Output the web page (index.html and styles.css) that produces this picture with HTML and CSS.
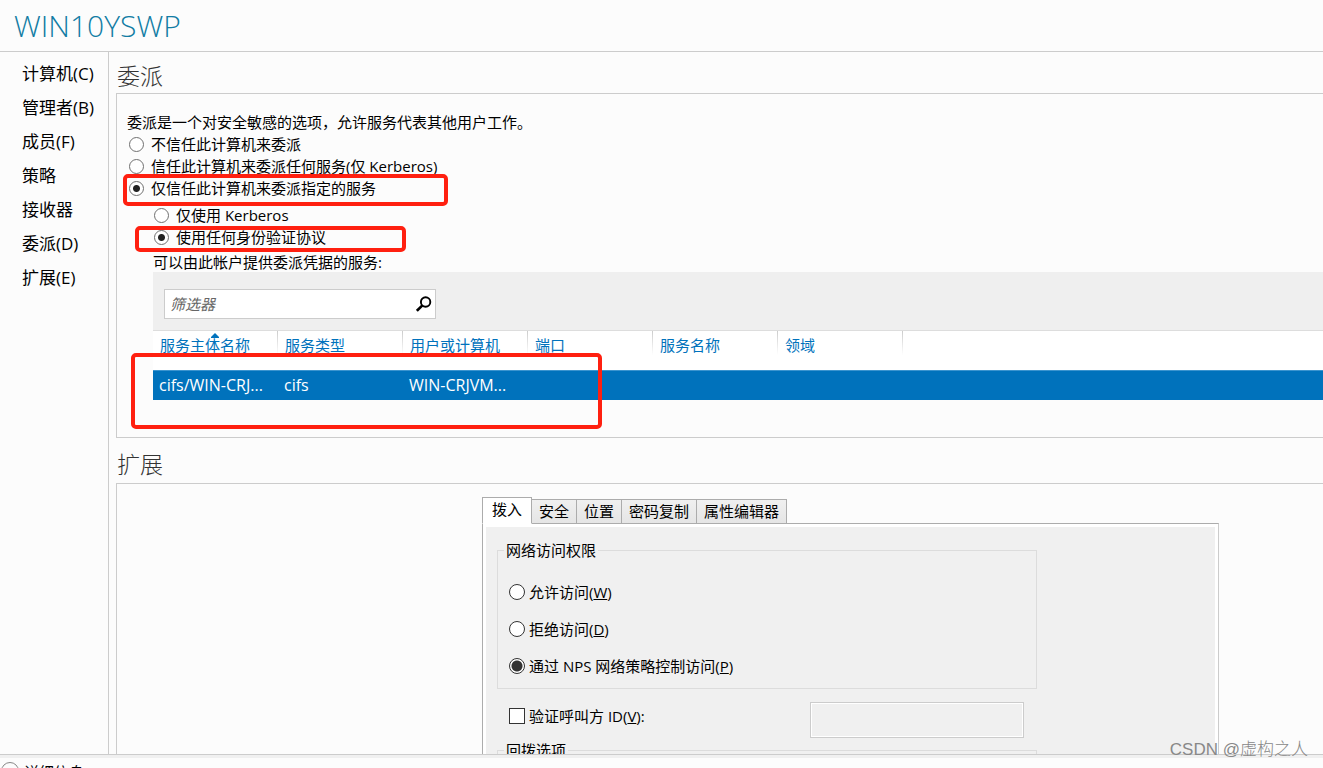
FILE: index.html
```html
<!DOCTYPE html>
<html lang="zh-CN">
<head>
<meta charset="utf-8">
<title>WIN10YSWP</title>
<link rel="stylesheet" href="styles.css">
</head>
<body>
<header class="title-bar"><h1 class="title">WIN10YSWP</h1></header>
<div class="main">
  <nav class="side">
    <a class="side-link" href="#computer">计算机(C)</a>
    <a class="side-link" href="#manager">管理者(B)</a>
    <a class="side-link" href="#members">成员(F)</a>
    <a class="side-link" href="#policy">策略</a>
    <a class="side-link" href="#silo">接收器</a>
    <a class="side-link" href="#delegation">委派(D)</a>
    <a class="side-link" href="#extensions">扩展(E)</a>
  </nav>
  <main class="content">
    <h2 class="heading" id="delegation">委派</h2>
    <section class="panel delegation">
      <p class="intro">委派是一个对安全敏感的选项，允许服务代表其他用户工作。</p>
      <label class="choice"><input class="radio" type="radio" name="trust">不信任此计算机来委派</label>
      <label class="choice"><input class="radio" type="radio" name="trust">信任此计算机来委派任何服务(仅 Kerberos)</label>
      <label class="choice"><input class="radio" type="radio" name="trust" checked>仅信任此计算机来委派指定的服务</label>
      <div class="sub-choices">
        <label class="choice"><input class="radio" type="radio" name="protocol">仅使用 Kerberos</label>
        <label class="choice"><input class="radio" type="radio" name="protocol" checked>使用任何身份验证协议</label>
      </div>
      <div class="services">
        <p class="services-label">可以由此帐户提供委派凭据的服务:</p>
        <div class="filter-bar">
          <div class="filter">
            <input class="filter-input" type="text" placeholder="筛选器" aria-label="筛选器">
            <button class="filter-button" type="button" aria-label="搜索">
              <svg width="16" height="16" viewBox="0 0 16 16" fill="none" stroke="#000"><circle cx="9.6" cy="6" r="4.7" stroke-width="1.9"/><path d="M6.4 9.4L0.9 14.8" stroke-width="2.6"/></svg>
            </button>
          </div>
        </div>
        <table class="grid">
          <colgroup><col class="col"><col class="col"><col class="col"><col class="col"><col class="col"><col class="col"><col></colgroup>
          <thead><tr>
            <th>服务主体名称<svg class="sort" width="8" height="5" viewBox="0 0 8 5"><path d="M0 5V4L4 0L8 4V5Z" fill="#0072bc"/></svg></th>
            <th>服务类型</th><th>用户或计算机</th><th>端口</th><th>服务名称</th><th>领域</th><td></td>
          </tr></thead>
          <tbody><tr><td>cifs/WIN-CRJ...</td><td>cifs</td><td>WIN-CRJVM...</td><td></td><td></td><td></td><td></td></tr></tbody>
        </table>
      </div>
      <div class="mark mark-trust"></div>
      <div class="mark mark-protocol"></div>
      <div class="mark mark-services"></div>
    </section>
    <h2 class="heading heading-next" id="extensions">扩展</h2>
    <section class="panel extensions">
      <div class="tabs" role="tablist">
        <button class="tab tab-active" type="button" role="tab" aria-selected="true">拨入</button>
        <button class="tab" type="button" role="tab">安全</button>
        <button class="tab" type="button" role="tab">位置</button>
        <button class="tab" type="button" role="tab">密码复制</button>
        <button class="tab" type="button" role="tab">属性编辑器</button>
      </div>
      <div class="pane">
        <fieldset class="group">
          <legend>网络访问权限</legend>
          <label class="option"><input class="radio radio-large" type="radio" name="access"><span>允许访问(<u>W</u>)</span></label>
          <label class="option"><input class="radio radio-large" type="radio" name="access"><span>拒绝访问(<u>D</u>)</span></label>
          <label class="option"><input class="radio radio-large" type="radio" name="access" checked><span>通过 NPS 网络策略控制访问(<u>P</u>)</span></label>
        </fieldset>
        <div class="caller">
          <label class="caller-check"><input class="check" type="checkbox"><span>验证呼叫方 ID(<u>V</u>):</span></label>
          <input class="caller-input" type="text" aria-label="呼叫方 ID" disabled>
        </div>
        <fieldset class="group group-callback"><legend>回拨选项</legend></fieldset>
      </div>
    </section>
  </main>
</div>
<footer class="footer">
  <button class="details" type="button"><span class="details-ring"></span>详细信息</button>
</footer>
<div class="watermark">CSDN @虚构之人</div>
</body>
</html>
```
FILE: styles.css
```css
* { box-sizing: border-box; }

body {
  margin: 0;
  height: 100vh;
  display: flex;
  flex-direction: column;
  overflow: hidden;
  position: relative;
  background: #fcfcfc;
  color: #000;
  font: 15px/20px "Open Sans", "Noto Sans CJK SC", sans-serif;
}

h1, h2, p { margin: 0; font-weight: 300; }
button, input { font: inherit; color: inherit; }

.title-bar { padding: 5px 14px; border-bottom: 1px solid #ccc; }
.title { font-size: 30px; line-height: 41px; color: #127ca4; }

.main { flex: 1; min-height: 0; display: flex; }
.side {
  width: 109px;
  flex: none;
  display: flex;
  flex-direction: column;
  padding: 5px 0 0 22px;
  border-right: 1px solid #ccc;
}
.side-link { font-size: 17px; line-height: 34px; color: #000; text-decoration: none; white-space: nowrap; }

.content { flex: 1; min-width: 0; display: flex; flex-direction: column; padding-left: 7px; overflow: hidden; }
.heading { padding: 8px 1px 0; font-size: 23px; line-height: 33px; color: #333; flex: none; }
.heading-next { padding: 10px 1px 2px; }

.panel { border: 1px solid #ccc; border-right: 0; }
.delegation { flex: none; position: relative; padding: 17px 0 37px 10px; }
.intro { font-weight: 400; line-height: 22px; }
.choice { display: flex; align-items: center; gap: 7px; padding-left: 2px; line-height: 22px; }
.sub-choices { padding: 5px 0 0 25px; }

.radio {
  appearance: none;
  flex: none;
  width: 15px;
  height: 15px;
  margin: 0;
  border: 1px solid #707070;
  border-radius: 50%;
  background: #fff;
}
.radio:checked { background: radial-gradient(circle, #222 0 3px, #fff 4px); }
.radio-large { width: 16px; height: 16px; border-color: #333; }
.radio-large:checked { background: radial-gradient(circle, #333 0 5px, #fff 6px); }

.services { margin: 5px 0 0 26px; }
.services-label { font-weight: 400; line-height: 19px; }
.filter-bar { padding: 17px 11px 11px; background: #efefef; border-bottom: 1px solid #ddd; }
.filter { display: flex; width: 272px; height: 30px; background: #fff; border: 1px solid #ccc; }
.filter-input { flex: 1; min-width: 0; padding: 0 5px; border: 0; background: none; outline: 0; }
.filter-input::placeholder { color: #666; font-style: italic; opacity: 1; }
.filter-button { display: flex; align-items: center; padding: 0 3px; border: 0; background: none; }

.grid { width: 100%; table-layout: fixed; border-collapse: collapse; }
.col { width: 125px; }
.grid th, .grid td { padding: 0 0 0 6px; text-align: left; font-weight: 400; white-space: nowrap; }
.grid thead { background: #fff; color: #0072bc; }
.grid th {
  position: relative;
  height: 39px;
  padding: 4px 0 0 7px;
  vertical-align: top;
  background: linear-gradient(#ccc, #fff) right top / 1px 24px no-repeat;
}
.sort { position: absolute; left: 58px; top: 2px; }
.grid tbody td { height: 30px; font-size: 16px; background: #0072bc; color: #fff; border-top: 1px solid #3b94cf; }

.mark { position: absolute; border: 4px solid #ff2010; border-radius: 5px; pointer-events: none; }
.mark-trust { left: 6px; top: 80px; width: 325px; height: 32px; }
.mark-protocol { left: 18px; top: 132px; width: 271px; height: 26px; }
.mark-services { left: 14px; top: 259px; width: 471px; height: 76px; }

.extensions { flex: 1; min-height: 0; overflow: hidden; border-bottom: 0; padding: 13px 104px 0 365px; }
.tabs { display: flex; align-items: flex-end; }
.tab {
  height: 25px;
  padding: 0 7px 1px;
  margin-left: -1px;
  border: 1px solid #acacac;
  background: linear-gradient(#f0f0f0, #e5e5e5);
  line-height: 20px;
  white-space: nowrap;
}
.tab-active { height: 27px; padding: 0 9px 3px; margin: 0; border-bottom-color: #fff; background: #fff; position: relative; }
.pane {
  margin-top: -1px;
  min-height: 300px;
  padding: 16px 14px;
  background: #f0f0f0;
  border: 1px solid #acacac;
  border-right-color: #ccc;
  box-shadow: inset 0 0 0 3px #fff;
}

.group { max-width: 540px; margin: 0; padding: 13px 6px 4px; border: 1px solid #dcdcdc; }
.group legend { padding: 0 2px; }
.option { display: flex; align-items: center; gap: 4px; height: 37px; padding-left: 5px; }
.caller { display: flex; justify-content: space-between; max-width: 527px; margin: 13px 0 2px; padding-left: 12px; }
.caller-check { display: flex; align-items: center; gap: 4px; height: 28px; }
.check { appearance: none; width: 16px; height: 16px; margin: 0; background: #fff; border: 1px solid #333; }
.check:checked { background: #333; }
.caller-input { width: 214px; height: 36px; border: 1px solid #ccc; background: #f0f0f0; box-shadow: inset 0 0 0 1px #fff; }
.group-callback { min-height: 100px; }

.footer { flex: none; height: 14px; overflow: hidden; border-top: 1px solid #ccc; box-shadow: inset 0 3px #f0f0f0; }
.details { display: flex; align-items: flex-start; gap: 5px; padding: 7px 0 0 1px; border: 0; background: none; line-height: 20px; }
.details-ring { width: 18px; height: 18px; border: 1px solid #888; border-radius: 50%; }

.watermark {
  position: absolute;
  right: 15px;
  bottom: 6px;
  font: 17px/24px "Liberation Sans", "Noto Sans CJK SC", sans-serif;
  font-weight: 300;
  color: #888;
}
```
